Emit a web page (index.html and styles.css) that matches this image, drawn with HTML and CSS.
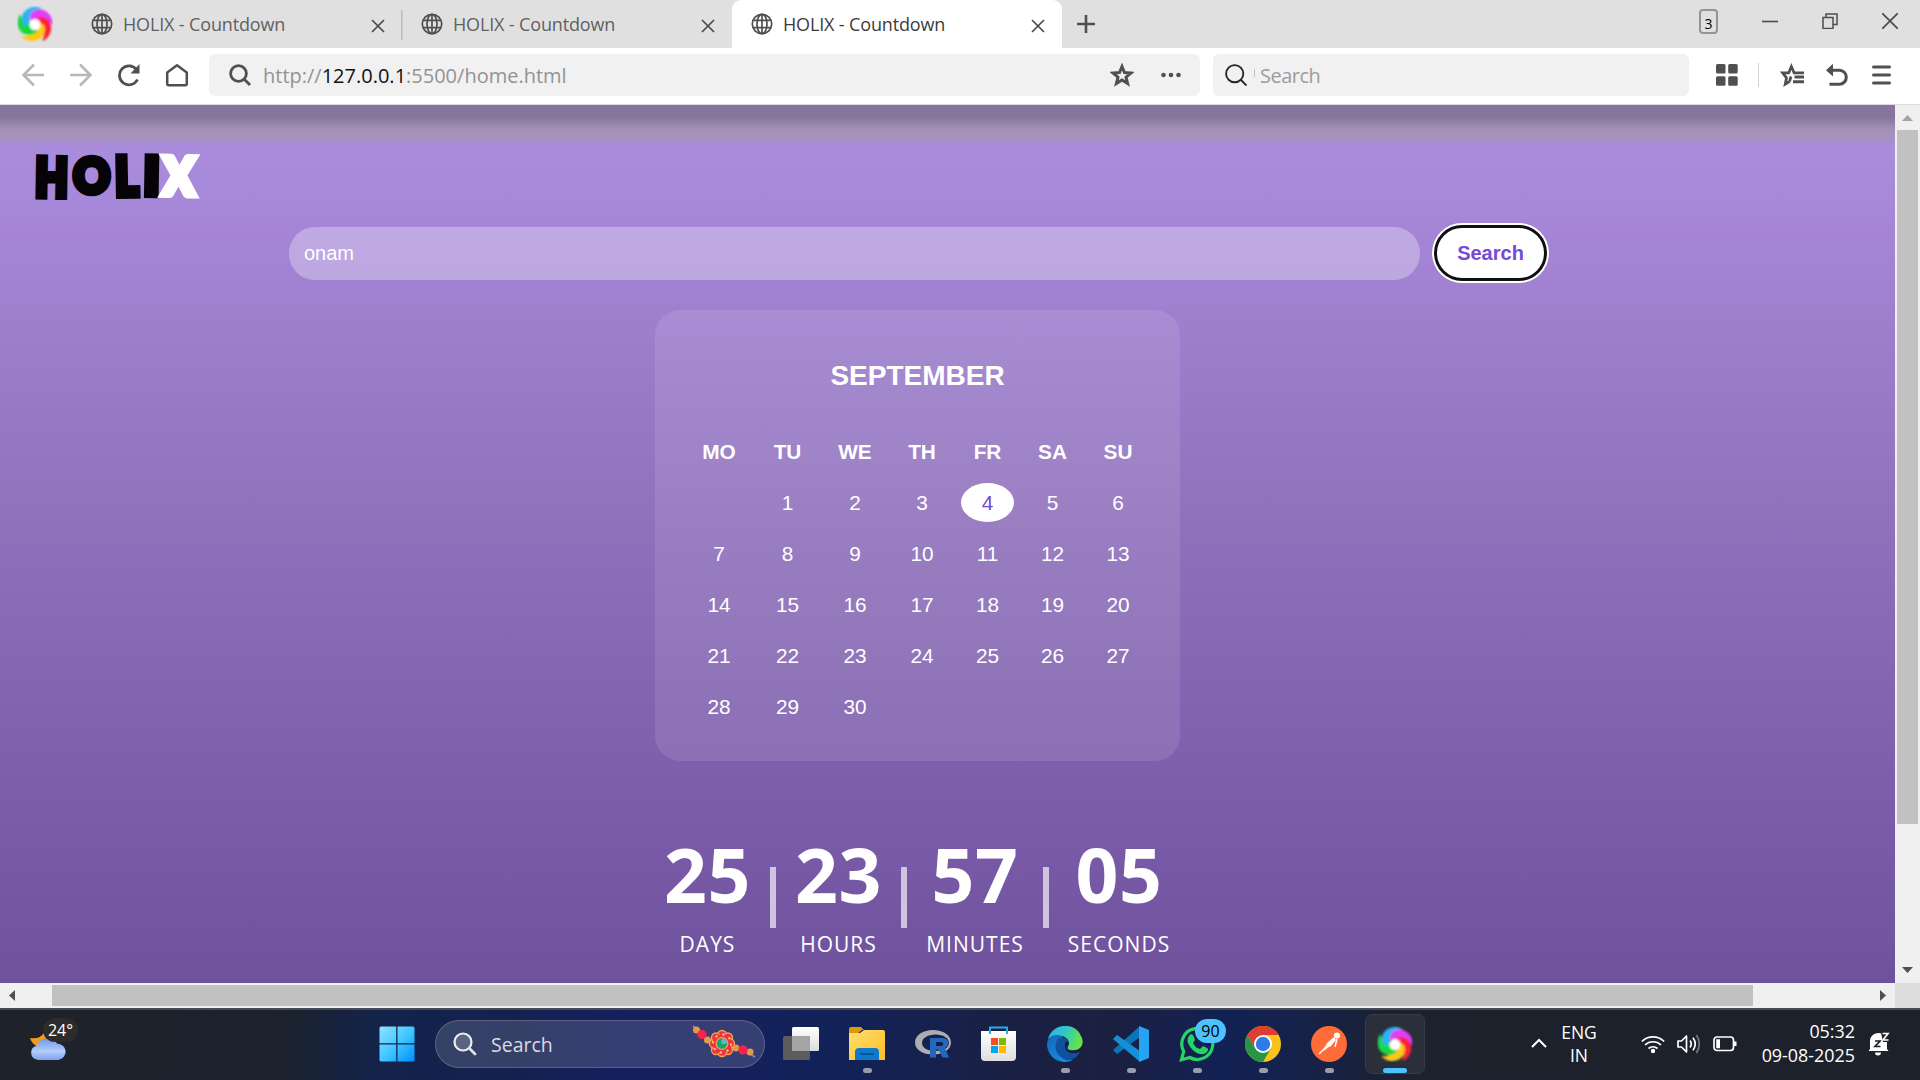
FILE: index.html
```html
<!DOCTYPE html>
<html lang="en">
<head>
<meta charset="utf-8">
<title>HOLIX - Countdown</title>
<link rel="stylesheet" href="styles.css">
</head>
<body>
<svg width="0" height="0" class="defs" aria-hidden="true">
  <defs>
    <symbol id="globe" viewBox="0 0 22 22"><g fill="none" stroke="#505050" stroke-width="1.7"><circle cx="11" cy="11" r="9.7"/><ellipse cx="11" cy="11" rx="5" ry="9.7"/><path d="M11 1v20M2.3 7.3h17.4M2.3 14.7h17.4"/></g></symbol>
    <symbol id="close" viewBox="0 0 14 14"><path d="M1 1l12 12M13 1L1 13" fill="none" stroke="#4a4a4a" stroke-width="1.7"/></symbol>
    <filter id="soft" x="-10%" y="-10%" width="120%" height="120%"><feGaussianBlur stdDeviation=".9"/></filter>
    <symbol id="swirl" viewBox="0 0 36 36">
      <g filter="url(#soft)">
        <path d="M5 20C2 9 9 0 20 1c3 .5 5 2 6 4-7-2-12 1-13 8 0 4-2 7-8 7z" fill="#2fb0f5"/>
        <path d="M12 12C13 3 25 1 31 7c4 4 5 8 4 13-3-6-7-8-12-6-5 2-8 2-11-2z" fill="#e23df4"/>
        <path d="M20 12c9-3 15 4 14 12-1 6-5 10-9 11 3-6 2-10-2-12-4-3-6-6-3-11z" fill="#fb2334"/>
        <path d="M27 19c3 8-2 15-10 16-6 .5-10-2-13-5 7 1 11-1 12-6 1-5 6-8 11-5z" fill="#fcc914"/>
        <path d="M20 26C12 32 3 28 1 20 0 15 1 12 3 8c2 6 5 9 9 8 5 0 9 4 8 10z" fill="#17d93c"/>
        <path d="M6 19C4 11 9 4 17 4c-4 3-4 7-4 11-1 4-4 5-7 4z" fill="#2fb0f5"/>
        <circle cx="18" cy="18.500" r="5.500" fill="#fff"/>
      </g>
    </symbol>
  </defs>
</svg>
<div class="screen">
  <header class="tabs">
    <svg class="brand"><use href="#swirl"/></svg>
    <div class="tab"><svg class="globe"><use href="#globe"/></svg><span>HOLIX - Countdown</span><svg class="close"><use href="#close"/></svg></div>
    <div class="tab divided"><svg class="globe"><use href="#globe"/></svg><span>HOLIX - Countdown</span><svg class="close"><use href="#close"/></svg></div>
    <div class="tab active"><svg class="globe"><use href="#globe"/></svg><span>HOLIX - Countdown</span><svg class="close"><use href="#close"/></svg></div>
    <svg class="plus" viewBox="0 0 18 18"><path d="M9 0v18M0 9h18" stroke="#505050" stroke-width="2.6"/></svg>
    <div class="window-tools">
      <span class="count">3</span>
      <svg width="16" height="16" viewBox="0 0 16 16"><path d="M0 8.500h16" stroke="#4c4c4c" stroke-width="1.6"/></svg>
      <svg width="16" height="16" viewBox="0 0 16 16"><path d="M1 4.500h10v11H1zM4 4.500v-3.500h11v10.500h-4" fill="none" stroke="#4c4c4c" stroke-width="1.5"/></svg>
      <svg width="16" height="16" viewBox="0 0 16 16"><path d="M0 0l16 16M16 0L0 16" stroke="#4c4c4c" stroke-width="1.7"/></svg>
    </div>
  </header>

  <nav class="toolbar">
    <div class="nav-icons">
      <svg viewBox="0 0 24 24"><path d="M23 12H3M13 1.500L2.500 12 13 22.500" fill="none" stroke="#b8b8b8" stroke-width="2.600"/></svg>
      <svg viewBox="0 0 24 24"><path d="M1 12h20M11 1.500L21.500 12 11 22.500" fill="none" stroke="#b8b8b8" stroke-width="2.600"/></svg>
      <svg viewBox="0 0 24 24"><path d="M20.500 16.500a9.500 9.500 0 1 1-1-10" fill="none" stroke="#505050" stroke-width="2.7"/><path d="M22.500 1v9.500h-9z" fill="#505050"/></svg>
      <svg viewBox="0 0 24 24"><path d="M2.200 9.500L12 2.200l9.800 7.300v11.300a1.500 1.500 0 0 1-1.500 1.500H3.700a1.500 1.500 0 0 1-1.500-1.500z" fill="none" stroke="#505050" stroke-width="2.5" stroke-linejoin="round"/></svg>
    </div>
    <div class="address">
      <svg width="22" height="22" viewBox="0 0 22 22"><g fill="none" stroke="#505050" stroke-width="2.8"><circle cx="9.500" cy="9.500" r="7.900"/><path d="M15 15l6 6"/></g></svg>
      <span class="url">http://<b>127.0.0.1</b>:5500/home.html</span>
      <svg class="star" width="24" height="24" viewBox="0 0 24 24"><path d="M12 3.500l2.500 6 6.500.5-5 4.200 1.600 6.400-5.600-3.500-5.600 3.500L8 14.200 3 10l6.500-.5z" fill="none" stroke="#505050" stroke-width="3"/></svg>
      <svg width="20" height="6" viewBox="0 0 20 6"><g fill="#505050"><circle cx="2.500" cy="3" r="2.300"/><circle cx="10" cy="3" r="2.300"/><circle cx="17.500" cy="3" r="2.300"/></g></svg>
    </div>
    <div class="quick">
      <svg width="22" height="22" viewBox="0 0 22 22"><g fill="none" stroke="#262626" stroke-width="1.900"><circle cx="9.700" cy="9.700" r="8.600"/><path d="M15.500 15.500l6 6"/></g></svg>
      <i></i><span>Search</span>
    </div>
    <div class="tools">
      <svg width="22" height="22" viewBox="0 0 22 22"><g fill="#505050"><rect width="9.500" height="9.500" rx="1.500"/><rect x="12.200" width="9.500" height="9.500" rx="1.500"/><rect y="12.300" width="9.500" height="9.500" rx="1.500"/><rect x="12.200" y="12.300" width="9.500" height="9.500" rx="1.500"/></g></svg>
      <i class="rule"></i>
      <svg width="25" height="24" viewBox="0 0 25 24"><path d="M9.500 18.500l-4.300 2.700 1.300-6.400-4-5h6.200l2.700-6.300 2.700 6.300H24M9.500 18.500l1.500-5" fill="none" stroke="#505050" stroke-width="2.700"/><path d="M14.500 14H24M13 18.800h11" stroke="#505050" stroke-width="2.900"/></svg>
      <svg width="22" height="24" viewBox="0 0 22 24"><path d="M4 7.200h9.500a6.800 7 0 0 1 0 14H3.500" fill="none" stroke="#505050" stroke-width="3"/><path d="M0 7.200L7 .8v12.800z" fill="#505050"/></svg>
      <svg width="19" height="20" viewBox="0 0 19 20"><path d="M1.500 2h16M1.500 10h16M1.500 18h16" stroke="#505050" stroke-width="3" stroke-linecap="round"/></svg>
    </div>
  </nav>

  <div class="viewport">
    <main class="page">
      <svg class="logo" width="180" height="96" viewBox="0 -22 180 96" aria-label="HOLIX">
        <g class="logo-text">
          <text transform="translate(5 49) rotate(1) scale(.75 .94)" fill="#050208" stroke="#050208">H</text>
          <text transform="translate(43.500 46) scale(.8 .86)" fill="#050208" stroke="#050208">O</text>
          <text transform="translate(85.500 48.500) rotate(-1) scale(.78 .95)" fill="#050208" stroke="#050208">L</text>
          <text transform="translate(113.500 47.500) rotate(1) scale(.92 .93)" fill="#050208" stroke="#050208">I</text>
          <text transform="translate(133 47.500) rotate(1) scale(.82 .92)" fill="#fff" stroke="#fff">X</text>
        </g>
      </svg>
      <div class="search-row"><div class="field">onam</div><button class="go">Search</button></div>
      <section class="calendar">
        <h2>SEPTEMBER</h2>
        <div class="days">
          <b>MO</b><b>TU</b><b>WE</b><b>TH</b><b>FR</b><b>SA</b><b>SU</b>
          <span></span><span>1</span><span>2</span><span>3</span><span class="chosen">4</span><span>5</span><span>6</span>
          <span>7</span><span>8</span><span>9</span><span>10</span><span>11</span><span>12</span><span>13</span>
          <span>14</span><span>15</span><span>16</span><span>17</span><span>18</span><span>19</span><span>20</span>
          <span>21</span><span>22</span><span>23</span><span>24</span><span>25</span><span>26</span><span>27</span>
          <span>28</span><span>29</span><span>30</span>
        </div>
      </section>
      <section class="countdown">
        <div class="unit"><strong>25</strong><span>DAYS</span></div><i></i>
        <div class="unit"><strong>23</strong><span>HOURS</span></div><i></i>
        <div class="unit wide"><strong>57</strong><span>MINUTES</span></div><i></i>
        <div class="unit widest"><strong>05</strong><span>SECONDS</span></div>
      </section>
    </main>
    <div class="vscroll">
      <svg width="11" height="6" viewBox="0 0 11 6"><path d="M0 6L5.500 0 11 6z" fill="#a3a3a3"/></svg>
      <div class="thumb"></div>
      <svg width="11" height="6" viewBox="0 0 11 6"><path d="M0 0h11L5.500 6z" fill="#505050"/></svg>
    </div>
    <div class="hscroll">
      <svg width="6" height="11" viewBox="0 0 6 11"><path d="M6 0v11L0 5.500z" fill="#505050"/></svg>
      <div class="thumb"></div>
      <svg width="6" height="11" viewBox="0 0 6 11"><path d="M0 0v11l6-5.500z" fill="#505050"/></svg>
    </div>
    <div class="corner"></div>
  </div>

  <footer class="taskbar">
    <div class="weather">
      <svg width="38" height="30" viewBox="0 0 38 30"><defs><linearGradient id="cl" x2="0" y2="1"><stop stop-color="#6d98ea"/><stop offset=".6" stop-color="#b3cdfb"/><stop offset="1" stop-color="#7aa2ee"/></linearGradient></defs><path d="M1 6c6 1 10 0 14-5l4 10-10 4C5 13 2 10 1 6z" fill="#f29a20"/><path d="M9 28a8.500 7.500 0 0 1-1-14.500 11 10 0 0 1 20-2 9 8.300 0 0 1 1 16.500z" fill="url(#cl)"/></svg>
      <span>24°</span>
    </div>
    <div class="apps">
      <div class="app start"><svg viewBox="0 0 36 36"><defs><linearGradient id="win" x2="1" y2="1"><stop stop-color="#8ee2ff"/><stop offset=".5" stop-color="#42c8ff"/><stop offset="1" stop-color="#008fff"/></linearGradient></defs><path d="M2 .5h15.200v16.700H.5V2A1.500 1.500 0 0 1 2 .5zM18.500.5H34A1.500 1.500 0 0 1 35.500 2v15.200h-17zM.5 18.500h16.700v17H2A1.500 1.500 0 0 1 .5 34zM18.500 18.500h17V34a1.500 1.500 0 0 1-1.500 1.500H18.500z" fill="url(#win)"/></svg></div>
      <div class="pill">
        <svg width="24" height="24" viewBox="0 0 24 24"><circle cx="10" cy="10" r="8.500" fill="#ffffff30" stroke="#eceef2" stroke-width="2.200"/><path d="M16.500 16.500l5.500 5.500" stroke="#dfe2e8" stroke-width="2.800" stroke-linecap="round"/></svg>
        <span>Search</span>
        <svg class="rakhi" width="64" height="34" viewBox="0 0 64 34">
          <path d="M1 1l14 14M50 24l13 8" stroke="#8d7bd8" stroke-width="2"/>
          <g fill="#e39a4d"><circle cx="4.500" cy="5" r="3.500"/><circle cx="15.500" cy="15" r="3.500"/><circle cx="44" cy="23" r="3.500"/><circle cx="58" cy="27" r="3.500"/></g>
          <circle cx="10" cy="9.500" r="4.700" fill="#f5224c"/><circle cx="51" cy="25" r="4.700" fill="#f5224c"/>
          <g fill="#ee3347" stroke="#f3a54f" stroke-width="1.300"><circle cx="30" cy="10" r="4.500"/><circle cx="36" cy="12.500" r="4.500"/><circle cx="38" cy="18.500" r="4.500"/><circle cx="36" cy="25" r="4.500"/><circle cx="30" cy="27" r="4.500"/><circle cx="24" cy="25" r="4.500"/><circle cx="22" cy="18.500" r="4.500"/><circle cx="24" cy="12.500" r="4.500"/></g>
          <circle cx="30" cy="18.500" r="9.500" fill="#ee3347"/><circle cx="30" cy="18.500" r="9" fill="none" stroke="#ffd36b" stroke-width="2" stroke-dasharray="2 5.070"/>
          <circle cx="30" cy="18.500" r="5.800" fill="#16a276" stroke="#f4a14a" stroke-width="1.300"/><circle cx="32" cy="16.500" r="2.800" fill="#62b9bd"/>
        </svg>
      </div>
      <div class="app"><svg viewBox="0 0 36 36"><defs><linearGradient id="tv" x2="0" y2="1"><stop stop-color="#fff"/><stop offset="1" stop-color="#dcdcdc"/></linearGradient></defs><rect x="9" y="1" width="27" height="24" rx="1.500" fill="url(#tv)"/><rect y="10" width="27" height="24" rx="1.500" fill="#5c5c5e"/><path d="M9 10h18v15H9z" fill="#a5a5a6"/></svg></div>
      <div class="app run"><svg viewBox="0 0 36 36"><defs><linearGradient id="fo" x2="1" y2="1"><stop stop-color="#ffdf70"/><stop offset="1" stop-color="#fdbd24"/></linearGradient></defs><path d="M0 3a2 2 0 0 1 2-2h10l3 3h-2L7 9H0z" fill="#df9905"/><path d="M0 7h11l4-3h19a2 2 0 0 1 2 2v28H0z" fill="url(#fo)"/><path d="M6 34V26a4 4 0 0 1 4-4h16a4 4 0 0 1 4 4v8z" fill="#0f79ce"/><path d="M11 28h14" stroke="#08559d" stroke-width="2"/></svg></div>
      <div class="app"><svg viewBox="0 0 36 36"><path fill-rule="evenodd" d="M18 4C28 4 36 9 36 16.500S28 28.500 18 28.500 0 24 0 16.500 8 4 18 4zM20.500 8.500C13 8.500 7 12 7 17s6 8 13.500 8S34 22 34 17 28 8.500 20.500 8.500z" fill="#abadb3"/><path fill-rule="evenodd" d="M15 12h12c8 0 8 8 3 10l4 9.500h-6.500l-4-8H21v8h-6zM21 16v4h5c3 0 3-4 0-4z" fill="#2368ba"/></svg></div>
      <div class="app"><svg viewBox="0 0 36 36"><defs><linearGradient id="st" x2="0" y2="1"><stop stop-color="#fff"/><stop offset="1" stop-color="#dedede"/></linearGradient></defs><path d="M0 5h35v26a4 4 0 0 1-4 4H4a4 4 0 0 1-4-4z" fill="url(#st)"/><path d="M9 8V1.500h17V8" fill="none" stroke="#25afea" stroke-width="2"/><path d="M10 12h7v7h-7z" fill="#f25022"/><path d="M18 12h7v7h-7z" fill="#7fba00"/><path d="M10 20h7v7h-7z" fill="#00a4ef"/><path d="M18 20h7v7h-7z" fill="#ffb900"/></svg></div>
      <div class="app run"><svg viewBox="0 0 36 36"><defs><linearGradient id="e1" x2="1" y2=".3"><stop stop-color="#28b3ee"/><stop offset=".55" stop-color="#31c8c0"/><stop offset="1" stop-color="#64e34b"/></linearGradient><linearGradient id="e2" x2=".7" y2="1"><stop stop-color="#1467b5"/><stop offset="1" stop-color="#168de2"/></linearGradient></defs><path d="M1 13C5-3 28-5 34 10c5 9-2 16-11 14-4-1-2-3-1-6 1-8-13-12-21-5z" fill="url(#e1)"/><path d="M0 18C1 9 9 7 16 11c-6 5-5 15 2 20 4 3 8 3 8 3C13 40 0 31 0 18z" fill="url(#e2)"/><path d="M12 12c6-1 10 2 10 6-1-4-5-3-4 2 0 7 8 9 15 6-3 6-9 9-14 8C9 30 5 19 12 12z" fill="#10519f"/></svg></div>
      <div class="app run"><svg viewBox="0 0 36 36"><path d="M27 0v11L4 28 0 24z" fill="#0a76b9"/><path d="M27 36V25L4 9 0 13z" fill="#168fd9"/><path d="M26 0l10 4v28l-10 4z" fill="#27a3f4"/></svg></div>
      <div class="app run"><svg viewBox="0 0 36 36"><path d="M2.500 33.700l2.200-8.300A15.500 15.500 0 1 1 10.800 31.500z" fill="none" stroke="#25d366" stroke-width="3.200"/><path d="M10 10c2-3 4-2 5 1l1 3-2 3c2 4 4 5 7 6l3-3 4 2c2 1 1 3-1 5-5 3-11 0-15-5-3-4-5-8-2-12z" fill="#25d366"/></svg><em>90</em></div>
      <div class="app run"><svg viewBox="0 0 36 36"><circle cx="18" cy="18" r="18" fill="#f9c31c"/><path d="M2.400 9A18 18 0 0 1 33.600 9H18l-7.800 13.500z" fill="#df3d31"/><path d="M2.400 9A18 18 0 0 0 18 36l7.800-13.500H10.200z" fill="#279447"/><circle cx="18" cy="18" r="9" fill="#fff"/><circle cx="18" cy="18" r="7.200" fill="#2f7bea"/></svg></div>
      <div class="app run"><svg viewBox="0 0 36 36"><circle cx="18" cy="18" r="18" fill="#ff6c37"/><circle cx="26" cy="9.500" r="3" fill="#fff"/><path d="M23 11l-8 7 4 3 6-7z" fill="#fff"/><path d="M26 13l-2 8M17 18l-4 5-5 5M19 19l-6 5" fill="none" stroke="#fff" stroke-width="1.500"/></svg></div>
      <div class="app run current"><svg viewBox="0 0 36 36"><use href="#swirl"/></svg></div>
    </div>
    <div class="tray">
      <svg class="chev" width="16" height="10" viewBox="0 0 16 10"><path d="M1 9l7-7 7 7" fill="none" stroke="#fff" stroke-width="2"/></svg>
      <div class="lang"><span>ENG</span><span>IN</span></div>
      <div class="status">
        <svg width="24" height="20" viewBox="0 0 24 20"><g fill="none" stroke="#fff" stroke-width="1.700"><path d="M.8 7.500a16 16 0 0 1 22.400 0M4 11a11.500 11.500 0 0 1 16 0M7.500 14.500a7 7 0 0 1 9 0"/></g><circle cx="12" cy="17" r="2.200" fill="#fff"/></svg>
        <svg width="24" height="20" viewBox="0 0 24 20"><g fill="none" stroke="#fff" stroke-width="1.700"><path d="M1 7h3.500l5-5v16l-5-5H1z" stroke-linejoin="round"/><path d="M13 6.500q2.500 3.500 0 7M16 3.800q4.500 6.200 0 12.400"/><path d="M19.500 1q5.500 9 0 18" stroke="#777b82"/></g></svg>
        <svg width="24" height="16" viewBox="0 0 24 16"><rect x="1" y="1" width="19.500" height="13.500" rx="3" fill="none" stroke="#fff" stroke-width="1.700"/><path d="M3.200 3.200H7v9H3.200zM21 5.500h2.500V10H21z" fill="#fff"/></svg>
      </div>
      <div class="clock"><span>05:32</span><span>09-08-2025</span></div>
      <svg width="22" height="24" viewBox="0 0 22 24"><path d="M2 17V9.500C2 4 6 1 11 1c3 0 8 3 8 8v8l1.500 2H.500zM7 20.500h6a3 3 0 0 1-6 0z" fill="#fff"/><path d="M7 9h5l-5 5.500h5.500" fill="none" stroke="#1c212b" stroke-width="1.700"/><path d="M13 .5h9v9.500h-7z" fill="#1c212b"/><path d="M14.500 1.500H20L15 8h5.500" fill="none" stroke="#fff" stroke-width="1.700"/></svg>
    </div>
  </footer>
</div>
</body>
</html>
```
FILE: styles.css
```css
* { box-sizing: border-box; }
body { margin: 0; font-family: "Open Sans", "Noto Sans", sans-serif; overflow: hidden; }
svg { display: block; flex: none; }
.defs { position: absolute; }
.screen { width: 1920px; height: 1080px; display: grid; grid-template-rows: 48px 57px 903px 72px; }

/* Tab strip */
.tabs { display: flex; background: #e0e0e0; align-items: center; }
.brand { width: 36px; height: 36px; margin: 0 20px 0 17px; }
.tab { width: 328px; height: 48px; display: flex; align-items: center; padding: 0 16px 0 18px; font-size: 18px; color: #606060; }
.tab span { margin-left: 10px; flex: 1; white-space: nowrap; letter-spacing: -.15px; }
.tab.divided { background: linear-gradient(#bcbcbc, #bcbcbc) 0 10px / 1.500px 30px no-repeat; width: 331px; padding: 0 17px 0 20px; }
.tab.active { background: #fff; color: #3c3c3c; border-radius: 9px 9px 0 0; width: 330px; padding: 0 17px 0 19px; }
.globe { width: 22px; height: 22px; }
.close { width: 14px; height: 14px; margin-top: 3px; }
.plus { width: 18px; height: 18px; margin-left: 15px; }
.window-tools { margin: 0 22px 6px auto; display: flex; align-items: center; gap: 44px; }
.count { width: 19px; height: 25px; border: 2px solid #949494; border-radius: 4px; font-size: 14px; line-height: 25px; text-align: center; color: #000; }

/* Address bar */
.toolbar { display: flex; align-items: center; background: #fff; border-bottom: 1px solid #dcdce0; padding-bottom: 2px; }
.nav-icons { display: flex; gap: 24px; padding-left: 21px; width: 209px; }
.nav-icons svg { width: 24px; height: 24px; }
.address, .quick { height: 42px; border-radius: 6px; background: #f1f1f1; display: flex; align-items: center; }
.address { width: 991px; padding: 0 19px 0 20px; }
.url { flex: 1; margin-left: 12px; font-size: 20px; color: #939393; }
.url b { font-weight: 400; color: #111; }
.star { margin-right: 27px; }
.quick { width: 476px; margin-left: 13px; padding-left: 12px; color: #9c9c9c; font-size: 20px; letter-spacing: -.5px; }
.quick i { width: 1px; height: 8px; background: #c4c4c4; margin: 0 5px 4px 7px; }
.tools { display: flex; align-items: center; margin-left: 27px; }
.rule { width: 1px; height: 24px; background: #d2d2d2; margin: 0 21px 0 20px; }
.tools svg + svg { margin-left: 21px; }
.tools svg:last-child { margin-left: 24px; }

/* Page and scrollbars */
.viewport { display: grid; grid-template: 878px 25px / 1895px 25px; }
.page { background: linear-gradient(#87749c 0, #87749c 12px, #a393b8 25px, #a592b9 31px, #a98ddc 40px, #a685d7 120px, #9f80cf 205px, #9172bd 395px, #8062af 620px, #785aa8 740px, #6f529c 878px); display: flex; flex-direction: column; }
.logo { margin: 20px 0 -16px 30px; }
.logo-text { font: 900 56px "Lato", sans-serif; stroke-width: 7.500px; stroke-linejoin: miter; }
.search-row { display: flex; align-items: center; height: 56px; margin: 20px 0 0 289px; font-family: "Liberation Sans", sans-serif; }
.field { width: 1131px; height: 53px; border-radius: 26px; background: #ffffff4d; color: #fff; font-size: 20px; line-height: 53px; padding-left: 15px; }
.go { width: 113px; height: 56px; margin-left: 14px; border: 3px solid #101010; border-radius: 28px; background: #fff; box-shadow: 0 0 0 2px #fff; color: #764ad6; font: bold 20px "Liberation Sans", sans-serif; padding: 0; }
.calendar { width: 525px; height: 451px; margin: 29px 0 0 655px; padding: 47px 35px 0; border-radius: 25px; background: #ffffff1a; color: #fff; font: 20.800px "Liberation Sans", sans-serif; }
.calendar h2 { margin: 0; font-size: 28px; line-height: 37px; text-align: center; }
.days { margin-top: 38px; display: grid; grid-template-columns: 58px 55px 56px 54px 53px 53px 54px; grid-auto-rows: 39px; gap: 12px; text-align: center; line-height: 39px; }
.chosen { background: #fff; color: #764ad6; border-radius: 50%; }
.countdown { display: flex; margin: 52px 0 0 657px; color: #fff; }
.countdown i { width: 6px; height: 61px; margin-top: 54px; background: #ffffffa6; }
.unit { width: 101px; display: flex; flex-direction: column; align-items: center; margin-right: 12px; }
.countdown i + .unit { margin: 0 12px; }
.unit strong { font-size: 75px; line-height: 100px; height: 100px; margin-top: 11px; letter-spacing: .5px; }
.unit span { font-size: 21px; line-height: 30px; margin-top: 5px; letter-spacing: 1px; }
.countdown .unit.wide { width: 112px; }
.countdown .unit.widest { width: 116px; }
.vscroll, .hscroll { background: #f0f0f0; display: flex; align-items: center; }
.vscroll { flex-direction: column; padding: 10px 0; justify-content: space-between; }
.vscroll .thumb { width: 21px; height: 694px; background: #c1c1c1; margin: 9px 0 auto; }
.hscroll { padding: 0 9px; justify-content: space-between; }
.hscroll .thumb { height: 21px; width: 1701px; background: #c1c1c1; margin: 0 auto 0 37px; }
.corner { background: #dcdcdc; }

/* Taskbar */
.taskbar { display: flex; align-items: center; padding-bottom: 2px; border-top: 2px solid #454a54; color: #fff; background: linear-gradient(90deg, #1e222b 0, #1b222e 290px, #13234a 375px, #142150 520px, #161f60 640px, #122257 850px, #1a2044 1010px, #1c2040 1110px, #122154 1220px, #15224b 1290px, #1c212d 1420px, #1c212b 1920px); }
.weather { width: 364px; height: 68px; position: relative; padding: 22px 0 0 29px; }
.weather span { position: absolute; left: 43px; top: 8px; width: 35px; height: 24px; border-radius: 12px; background: #2d2c2b; font-size: 16px; line-height: 24px; text-align: center; }
.apps { display: flex; align-items: center; }
.app { width: 60px; height: 60px; margin: 0 3px; display: grid; place-items: center; position: relative; border-radius: 7px; }
.app svg { width: 36px; height: 36px; }
.app.start { margin: 0 8px 0 3px; }
.run::after { content: ""; position: absolute; left: 26px; bottom: 1px; width: 9px; height: 5px; border-radius: 3px; background: #9a9dab; }
.current { background: #2b2f3b; border: 1px solid #373b46; }
.current::after { left: 17px; bottom: 0; width: 24px; background: #4cc2ff; }
.app em { position: absolute; left: 28px; top: 5px; width: 31px; height: 24px; border-radius: 12px; background: #4cc2ff; color: #000; font: 16px/24px "Open Sans", sans-serif; text-align: center; }
.pill { width: 330px; height: 48px; border-radius: 24px; border: 1px solid #ffffff30; background: #ffffff24; display: flex; align-items: center; padding: 0 8px 0 17px; margin-right: 3px; font-size: 19.500px; color: #d9dce4; }
.pill span { flex: 1; margin-left: 14px; }
.pill .rakhi { margin-top: -4px; }
.tray { margin-left: auto; margin-right: 30px; display: flex; align-items: center; font-size: 17.500px; }
.chev { margin-top: -2px; }
.lang, .clock { display: flex; flex-direction: column; line-height: 23.500px; }
.lang { align-items: center; width: 36px; margin: 0 27px 0 31px; margin-left: 14px; }
.status { display: flex; align-items: center; gap: 12px; margin-left: 17px; }
.clock { align-items: flex-end; width: 94px; margin: 0 13px 0 24px; padding-bottom: 1px; white-space: nowrap; font-size: 17.900px; }
```
